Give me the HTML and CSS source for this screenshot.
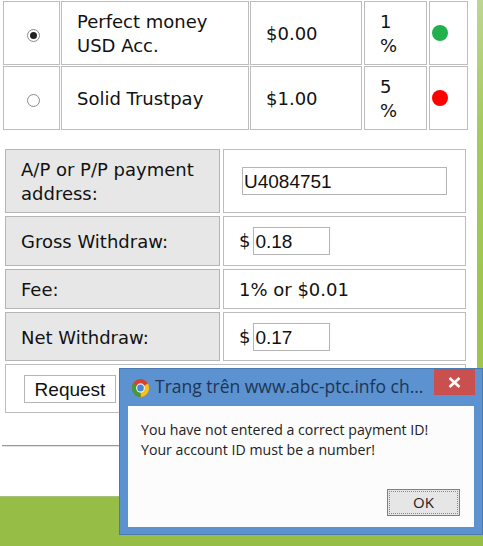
FILE: index.html
```html
<!DOCTYPE html>
<html lang="en">
<head>
<meta charset="utf-8">
<title>Withdraw</title>
<link rel="stylesheet" href="styles.css">
</head>
<body>
<div class="page">
  <main class="sheet">
    <div class="methods">
      <div class="cell c-radio"><span class="radio on"></span></div>
      <div class="cell c-name txt">Perfect money<br>USD Acc.</div>
      <div class="cell c-min txt">$0.00</div>
      <div class="cell c-fee txt">1<br>%</div>
      <div class="cell c-dot"><span class="dot green"></span></div>
      <div class="cell c-radio"><span class="radio"></span></div>
      <div class="cell c-name txt">Solid Trustpay</div>
      <div class="cell c-min txt">$1.00</div>
      <div class="cell c-fee txt">5<br>%</div>
      <div class="cell c-dot"><span class="dot red"></span></div>
    </div>
    <div class="form">
      <div class="cell lbl txt">A/P or P/P payment<br>address:</div>
      <div class="cell val wide-val"><span class="field wide">U4084751</span></div>
      <div class="cell lbl txt">Gross Withdraw:</div>
      <div class="cell val"><span class="cur">$</span><span class="field small">0.18</span></div>
      <div class="cell lbl txt">Fee:</div>
      <div class="cell val txt">1% or $0.01</div>
      <div class="cell lbl txt">Net Withdraw:</div>
      <div class="cell val"><span class="cur">$</span><span class="field small">0.17</span></div>
      <div class="cell act"><span class="btn">Request</span></div>
    </div>
    <hr class="rule">
  </main>
  <div class="band"></div>
  <section class="dialog">
    <header class="d-title">
      <svg class="chrome" width="17" height="18" viewBox="0 0 20 20" preserveAspectRatio="none">
        <circle cx="10" cy="10" r="10" fill="#d8402f"/>
        <path d="M10 10 L18.7 5 A10 10 0 0 1 10 20 Z" fill="#f3c21b"/>
        <path d="M10 10 L10 20 A10 10 0 0 1 1.3 5 Z" fill="#3f9c3c"/>
        <circle cx="10" cy="10" r="5.2" fill="#f4f4f4"/>
        <circle cx="10" cy="10" r="3.9" fill="#4a86d8"/>
      </svg>
      <span class="d-text">Trang trên www.abc-ptc.info ch...</span>
      <span class="close"><svg width="13" height="11" viewBox="0 0 13 11"><path d="M1.5 1 L11.5 10 M11.5 1 L1.5 10" stroke="#fff" stroke-width="2.6" fill="none"/></svg></span>
    </header>
    <div class="d-body">
      <p class="d-msg">You have not entered a correct payment ID!<br>Your account ID must be a number!</p>
      <div class="d-foot"><span class="ok">OK</span></div>
    </div>
  </section>
</div>
</body>
</html>
```

FILE: styles.css
```css
html, body { margin: 0; padding: 0; }
body { width: 483px; height: 546px; overflow: hidden; }
.page { position: relative; width: 483px; height: 546px; overflow: hidden; background: linear-gradient(#bdd692 0, #a6ca5c 130px, #9fc54f 300px, #9fc54f 100%); }
.sheet { width: 477px; height: 496px; background: #fff; padding-top: 1px; box-sizing: border-box; font-family: "DejaVu Sans", sans-serif; font-size: 18px; color: #111; }
.band { height: 50px; box-sizing: border-box; background: #96bd45; border-top: 1px solid #a7bf78; }
.cell { border: 1px solid #bdbdbd; box-sizing: border-box; display: flex; align-items: center; padding-left: 15px; line-height: 24px; }
.txt { padding-top: 2px; }
.methods { display: grid; grid-template-columns: 58px 189px 114px 65px 39px; grid-template-rows: 64px 64px; row-gap: 1px; margin-left: 3px; width: 465px; }
.c-radio { width: 57px; padding: 5px 0 0 23px; }
.c-name { width: 188px; }
.c-min { width: 112px; }
.c-fee { width: 63px; }
.c-dot { width: 39px; padding-left: 2px; }
.radio { display: block; width: 13px; height: 13px; box-sizing: border-box; border: 1px solid #8a8a8a; border-radius: 50%; background: #fff; position: relative; }
.radio.on::after { content: ""; position: absolute; inset: 2px; border-radius: 50%; background: #222; }
.dot { display: block; width: 16px; height: 16px; border-radius: 50%; }
.green { background: #22b14c; }
.red { background: #fe0000; }
.form { display: grid; grid-template-columns: 215px 243px; grid-template-rows: 64px 50px 40px 49px 49px; gap: 3px; margin: 19px 0 0 5px; width: 461px; }
.lbl { background: #e7e7e7; border-color: #b5b5b5; }
.val { padding-left: 15px; }
.cur { margin-right: 3px; }
.wide-val { padding-left: 18px; }
.act { grid-column: 1 / 3; padding-left: 18px; }
.field { display: block; box-sizing: border-box; border: 1px solid #b5b5b5; font-family: "Liberation Sans", sans-serif; font-size: 19px; line-height: 28px; height: 28px; padding-left: 1px; color: #111; }
.wide { width: 205px; }
.small { width: 77px; }
.btn { display: block; box-sizing: border-box; width: 92px; height: 28px; border: 1px solid #b5b5b5; font-family: "Liberation Sans", sans-serif; font-size: 19px; line-height: 28px; text-align: center; color: #111; }
.rule { margin: 32px 0 0 2px; width: 474px; border: 0; border-top: 1px solid #9a9a9a; border-bottom: 1px solid #e2e2e2; }
.dialog { position: absolute; left: 119px; top: 368px; width: 364px; height: 167px; box-sizing: border-box; background: #5b92cf; border: 1px solid #4a7ab0; padding: 0 8px 7px; display: flex; flex-direction: column; }
.d-title { height: 37px; display: flex; align-items: center; position: relative; flex: none; }
.chrome { flex: none; margin: 0 6px 0 4px; }
.d-text { font-family: "Open Sans", sans-serif; font-size: 17.5px; line-height: 24px; margin-top: -3px; color: #1d3557; white-space: nowrap; }
.close { position: absolute; right: -1px; top: 0; width: 41px; height: 26px; background: #c9504f; display: flex; align-items: center; justify-content: center; }
.d-body { flex: 1; background: #fcfcfc; display: flex; flex-direction: column; }
.d-msg { margin: 14px 0 0 13px; font-family: "Open Sans", sans-serif; font-size: 14.15px; line-height: 20px; color: #222; flex: 1; }
.d-foot { display: flex; justify-content: flex-end; padding: 0 14px 11px 0; }
.ok { width: 73px; height: 27px; box-sizing: border-box; border: 1px solid #3d8fd0; background: #e6e6e6; outline: 1px dotted #8a8a8a; outline-offset: -3px; text-align: center; font-family: "Open Sans", sans-serif; font-size: 15px; line-height: 25px; color: #222; }
```
